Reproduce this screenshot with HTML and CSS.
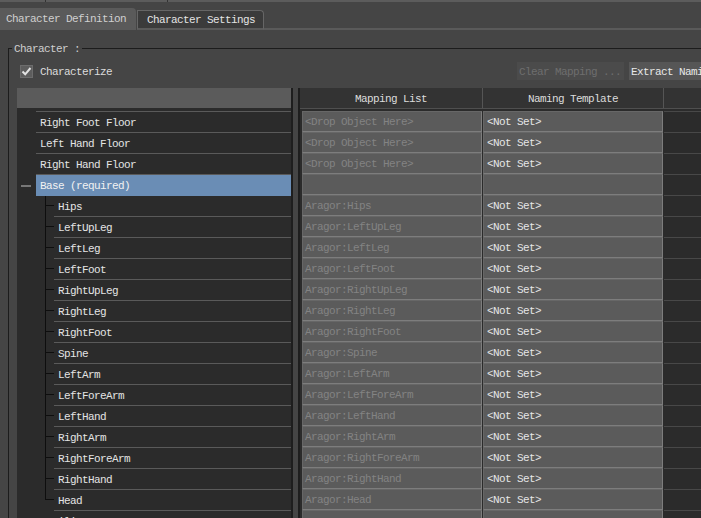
FILE: index.html
```html
<!DOCTYPE html>
<html>
<head>
<meta charset="utf-8">
<title>Character Definition</title>
<link rel="stylesheet" href="styles.css">
</head>
<body>
<div class="topstrip"><i class="seg a"></i><i class="seg b"></i><i class="seg c"></i></div>
<div class="tabbar">
  <div class="tab active">Character Definition</div>
  <div class="tab inactive">Character Settings</div>
  <div class="tabfill"></div>
</div>
<fieldset class="group">
  <legend>Character :</legend>
  <div class="charrow">
    <span class="check"><svg width="11" height="11" viewBox="0 0 11 11"><path d="M1.5 5.5 L4.2 8.3 L9.5 2" fill="none" stroke="#e2e2e2" stroke-width="2"/></svg></span>
    <span class="charlabel">Characterize</span>
    <div class="cmds">
      <button class="btn disabled">Clear Mapping ...</button>
      <button class="btn extract">Extract Naming Template</button>
    </div>
  </div>
  <div class="main">
    <div class="tree">
      <div class="thead"></div>
      <div class="tbody">
        <div class="trow partial"><span class="gut"></span><span class="lbl"></span></div>
        <div class="trow"><span class="gut"></span><span class="lbl">Right Foot Floor</span></div>
        <div class="trow"><span class="gut"></span><span class="lbl">Left Hand Floor</span></div>
        <div class="trow"><span class="gut"></span><span class="lbl">Right Hand Floor</span></div>
        <div class="trow sel"><span class="gut"><span class="minus"></span></span><span class="lbl">Base (required)</span></div>
        <div class="trow child"><span class="gut"><span class="conn"><span class="conn-top"></span><span class="conn-bot"></span></span></span><span class="lbl">Hips</span></div>
        <div class="trow child"><span class="gut"><span class="conn"><span class="conn-top"></span><span class="conn-bot"></span></span></span><span class="lbl">LeftUpLeg</span></div>
        <div class="trow child"><span class="gut"><span class="conn"><span class="conn-top"></span><span class="conn-bot"></span></span></span><span class="lbl">LeftLeg</span></div>
        <div class="trow child"><span class="gut"><span class="conn"><span class="conn-top"></span><span class="conn-bot"></span></span></span><span class="lbl">LeftFoot</span></div>
        <div class="trow child"><span class="gut"><span class="conn"><span class="conn-top"></span><span class="conn-bot"></span></span></span><span class="lbl">RightUpLeg</span></div>
        <div class="trow child"><span class="gut"><span class="conn"><span class="conn-top"></span><span class="conn-bot"></span></span></span><span class="lbl">RightLeg</span></div>
        <div class="trow child"><span class="gut"><span class="conn"><span class="conn-top"></span><span class="conn-bot"></span></span></span><span class="lbl">RightFoot</span></div>
        <div class="trow child"><span class="gut"><span class="conn"><span class="conn-top"></span><span class="conn-bot"></span></span></span><span class="lbl">Spine</span></div>
        <div class="trow child"><span class="gut"><span class="conn"><span class="conn-top"></span><span class="conn-bot"></span></span></span><span class="lbl">LeftArm</span></div>
        <div class="trow child"><span class="gut"><span class="conn"><span class="conn-top"></span><span class="conn-bot"></span></span></span><span class="lbl">LeftForeArm</span></div>
        <div class="trow child"><span class="gut"><span class="conn"><span class="conn-top"></span><span class="conn-bot"></span></span></span><span class="lbl">LeftHand</span></div>
        <div class="trow child"><span class="gut"><span class="conn"><span class="conn-top"></span><span class="conn-bot"></span></span></span><span class="lbl">RightArm</span></div>
        <div class="trow child"><span class="gut"><span class="conn"><span class="conn-top"></span><span class="conn-bot"></span></span></span><span class="lbl">RightForeArm</span></div>
        <div class="trow child"><span class="gut"><span class="conn"><span class="conn-top"></span><span class="conn-bot"></span></span></span><span class="lbl">RightHand</span></div>
        <div class="trow child last"><span class="gut"><span class="conn"><span class="conn-top"></span><span class="conn-bot"></span></span></span><span class="lbl">Head</span></div>
        <div class="trow"><span class="gut"><span class="minus"></span></span><span class="lbl">Auxiliary</span></div>
      </div>
    </div>
    <div class="splitter"></div>
    <div class="table">
      <div class="hrow"><div class="hcell c1">Mapping List</div><div class="hcell c2">Naming Template</div><div class="hcell c3"></div></div>
      <div class="rows">
        <div class="row"><span class="cell map">&lt;Drop Object Here&gt;</span><span class="cell name">&lt;Not Set&gt;</span><span class="extra"></span></div>
        <div class="row"><span class="cell map">&lt;Drop Object Here&gt;</span><span class="cell name">&lt;Not Set&gt;</span><span class="extra"></span></div>
        <div class="row"><span class="cell map">&lt;Drop Object Here&gt;</span><span class="cell name">&lt;Not Set&gt;</span><span class="extra"></span></div>
        <div class="row"><span class="cell map"></span><span class="cell name"></span><span class="extra"></span></div>
        <div class="row"><span class="cell map">Aragor:Hips</span><span class="cell name">&lt;Not Set&gt;</span><span class="extra"></span></div>
        <div class="row"><span class="cell map">Aragor:LeftUpLeg</span><span class="cell name">&lt;Not Set&gt;</span><span class="extra"></span></div>
        <div class="row"><span class="cell map">Aragor:LeftLeg</span><span class="cell name">&lt;Not Set&gt;</span><span class="extra"></span></div>
        <div class="row"><span class="cell map">Aragor:LeftFoot</span><span class="cell name">&lt;Not Set&gt;</span><span class="extra"></span></div>
        <div class="row"><span class="cell map">Aragor:RightUpLeg</span><span class="cell name">&lt;Not Set&gt;</span><span class="extra"></span></div>
        <div class="row"><span class="cell map">Aragor:RightLeg</span><span class="cell name">&lt;Not Set&gt;</span><span class="extra"></span></div>
        <div class="row"><span class="cell map">Aragor:RightFoot</span><span class="cell name">&lt;Not Set&gt;</span><span class="extra"></span></div>
        <div class="row"><span class="cell map">Aragor:Spine</span><span class="cell name">&lt;Not Set&gt;</span><span class="extra"></span></div>
        <div class="row"><span class="cell map">Aragor:LeftArm</span><span class="cell name">&lt;Not Set&gt;</span><span class="extra"></span></div>
        <div class="row"><span class="cell map">Aragor:LeftForeArm</span><span class="cell name">&lt;Not Set&gt;</span><span class="extra"></span></div>
        <div class="row"><span class="cell map">Aragor:LeftHand</span><span class="cell name">&lt;Not Set&gt;</span><span class="extra"></span></div>
        <div class="row"><span class="cell map">Aragor:RightArm</span><span class="cell name">&lt;Not Set&gt;</span><span class="extra"></span></div>
        <div class="row"><span class="cell map">Aragor:RightForeArm</span><span class="cell name">&lt;Not Set&gt;</span><span class="extra"></span></div>
        <div class="row"><span class="cell map">Aragor:RightHand</span><span class="cell name">&lt;Not Set&gt;</span><span class="extra"></span></div>
        <div class="row"><span class="cell map">Aragor:Head</span><span class="cell name">&lt;Not Set&gt;</span><span class="extra"></span></div>
        <div class="row"><span class="cell map"></span><span class="cell name"></span><span class="extra"></span></div>
      </div>
    </div>
  </div>
</fieldset>
</body>
</html>
```

FILE: styles.css
```css
* { box-sizing: border-box; }
html, body { margin: 0; padding: 0; overflow: hidden; }
body {
  width: 701px;
  height: 518px;
  background: #454545;
  font-family: "Liberation Mono", "DejaVu Sans Mono", monospace;
  font-size: 11px;
  letter-spacing: -0.6px;
  color: #e2e2e2;
}

/* top strip */
.topstrip { display: flex; height: 2px; background: #5c5c5c; }
.seg { display: block; height: 2px; }
.seg.a { width: 45px; }
.seg.b { width: 122px; border-left: 1px solid #333; }
.seg.c { flex: 1; border-left: 1px solid #333; }

/* tabs */
.tabbar { display: flex; align-items: flex-start; height: 22px; margin-top: 6px; }
.tab { white-space: nowrap; flex: none; overflow: hidden; }
.tab.active {
  width: 136px; height: 22px;
  background: #5a5a5a;
  border-top-right-radius: 4px;
  padding-left: 6px;
  line-height: 22px;
  color: #d0d0d0;
}
.tab.inactive {
  width: 127px; height: 20px;
  margin: 2px 0 0 1px;
  background: #3b3b3b;
  border: 1px solid #666;
  border-bottom: 2px solid #5a5a5a;
  border-top-right-radius: 4px;
  padding-left: 9px;
  line-height: 19px;
  color: #e4e4e4;
}
.tabfill { flex: 1; align-self: stretch; border-bottom: 2px solid #5a5a5a; }

/* group box */
.group {
  margin: 11px 0 0 8px;
  padding: 0 0 0 3px;
  width: 772px;
  min-width: 0;
  border: none;
  border-top: 1px solid #1c1c1c;
  border-left: 1px solid #1c1c1c;
}
.group legend { padding: 2px 2px 0; line-height: 13px; color: #cfcfcf; }

.charrow { display: flex; align-items: center; height: 18px; margin-top: 6px; }
.check {
  display: flex; align-items: center; justify-content: center;
  width: 13px; height: 13px; margin-left: 8px;
  background: #5d5d5d; border: 1px solid #6c6c6c;
}
.charlabel { margin-left: 7px; color: #dcdcdc; line-height: 20px; padding-top: 2px; }
.cmds { display: flex; gap: 5px; margin-left: auto; margin-right: 5px; }
.btn {
  height: 18px; padding: 2px 2px 0; border: none;
  font: inherit; letter-spacing: inherit; text-align: left; white-space: nowrap;
  line-height: 16px;
}
.btn.disabled { width: 107px; background: #4b4b4b; color: #6e6e6e; }
.btn.extract { width: 146px; background: #565656; color: #e8e8e8; }

/* main */
.main { display: flex; margin: 8px 0 0 5px; }

.tree { width: 274px; flex: none; background: #2b2b2b; }
.thead { height: 20px; background: #5b5b5b; }
.trow { display: flex; height: 21px; }
.trow.partial { height: 4px; }
.gut { flex: none; width: 19px; display: flex; align-items: center; }
.trow.child .gut { width: 37px; align-items: stretch; }
.lbl {
  flex: 1;
  border-bottom: 1px solid #5a5a5a;
  padding-left: 4px;
  line-height: 22px;
  white-space: nowrap;
  overflow: hidden;
  color: #e4e4e4;
}
.trow.sel .lbl { background: #6a8db5; border-bottom-color: #6a8db5; color: #f2f2f2; }
.minus { width: 10px; height: 2px; margin-left: 4px; background: #777; }
.conn { display: flex; flex-direction: column; width: 9px; margin-left: 28px; }
.conn-top { height: 10px; border-left: 1px solid #0e0e0e; border-bottom: 1px solid #0e0e0e; }
.conn-bot { flex: 1; border-left: 1px solid #0e0e0e; }
.trow.last .conn-bot { border-left: none; }

.splitter {
  flex: none; width: 9px;
  border-left: 2px solid #1e1e1e;
  border-right: 2px solid #1e1e1e;
  background: #454545;
}

.table { flex: none; width: 480px; background: #2b2b2b; }
.hrow {
  display: flex; height: 21px;
  background: #333;
  border-bottom: 1px solid #4f4f4f;
  line-height: 22px;
  color: #dcdcdc;
}
.hcell { white-space: nowrap; overflow: hidden; }
.hcell.c1 { width: 183px; border-right: 1px solid #555; text-align: center; }
.hcell.c2 { width: 181px; border-right: 1px solid #555; text-align: center; }
.hcell.c3 { flex: 1; }
.rows { padding: 2px 0 0 2px; }
.row { display: flex; height: 21px; }
.cell {
  height: 21px;
  background: #5b5b5b;
  border: 1px solid;
  border-color: #676767 #7d7d7d #7d7d7d #676767;
  line-height: 21px;
  white-space: nowrap;
  overflow: hidden;
}
.cell.map { width: 180px; margin-right: 1px; padding-left: 2px; color: #838383; }
.cell.name { width: 180px; padding-left: 3px; color: #e6e6e6; }
.extra { flex: 1; margin-left: 1px; border-top: 1px solid #484848; }
```
